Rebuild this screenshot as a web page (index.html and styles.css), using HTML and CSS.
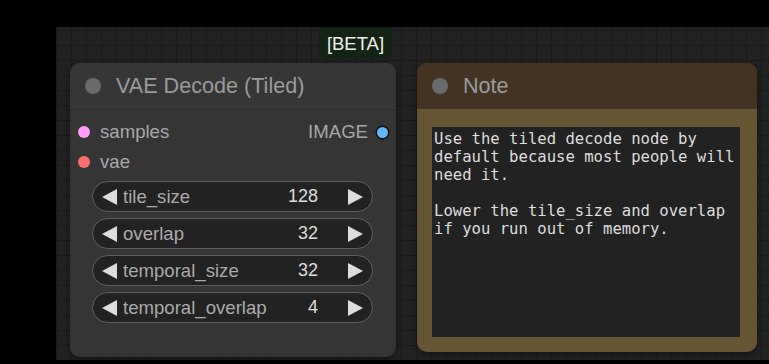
FILE: index.html
```html
<!DOCTYPE html>
<html lang="en">
<head>
  <meta charset="UTF-8">
  <meta name="viewport" content="width=device-width, initial-scale=1.0">
  <title>VAE Decode (Tiled)</title>
  <link rel="stylesheet" href="styles.css">
</head>
<body>
  <div class="canvas">
    <div class="badge">[BETA]</div>

    <div class="node vae">
      <div class="node-title">
        <span class="title-dot"></span>
        <span class="title-text">VAE Decode (Tiled)</span>
      </div>
      <div class="node-body">
        <div class="slot-row">
          <div class="slot"><span class="dot latent"></span>samples</div>
          <div class="slot out">IMAGE<span class="dot image"></span></div>
        </div>
        <div class="slot-row">
          <div class="slot"><span class="dot vae-in"></span>vae</div>
        </div>
        <div class="widgets">
          <div class="widget">
            <svg class="arrow" width="15" height="16" viewBox="0 0 15 16"><polygon points="15,0 15,16 0,8"/></svg>
            <span class="w-label">tile_size</span>
            <span class="w-value">128</span>
            <svg class="arrow" width="15" height="16" viewBox="0 0 15 16"><polygon points="0,0 0,16 15,8"/></svg>
          </div>
          <div class="widget">
            <svg class="arrow" width="15" height="16" viewBox="0 0 15 16"><polygon points="15,0 15,16 0,8"/></svg>
            <span class="w-label">overlap</span>
            <span class="w-value">32</span>
            <svg class="arrow" width="15" height="16" viewBox="0 0 15 16"><polygon points="0,0 0,16 15,8"/></svg>
          </div>
          <div class="widget">
            <svg class="arrow" width="15" height="16" viewBox="0 0 15 16"><polygon points="15,0 15,16 0,8"/></svg>
            <span class="w-label">temporal_size</span>
            <span class="w-value">32</span>
            <svg class="arrow" width="15" height="16" viewBox="0 0 15 16"><polygon points="0,0 0,16 15,8"/></svg>
          </div>
          <div class="widget">
            <svg class="arrow" width="15" height="16" viewBox="0 0 15 16"><polygon points="15,0 15,16 0,8"/></svg>
            <span class="w-label">temporal_overlap</span>
            <span class="w-value">4</span>
            <svg class="arrow" width="15" height="16" viewBox="0 0 15 16"><polygon points="0,0 0,16 15,8"/></svg>
          </div>
        </div>
      </div>
    </div>

    <div class="node note">
      <div class="node-title">
        <span class="title-dot"></span>
        <span class="title-text">Note</span>
      </div>
      <div class="note-body">
        <textarea class="note-text" readonly>Use the tiled decode node by default because most people will need it.

Lower the tile_size and overlap if you run out of memory.</textarea>
      </div>
    </div>
  </div>
</body>
</html>
```

FILE: styles.css
```css
body {
  margin: 0;
  background: #000;
  font-family: 'Liberation Sans', Arial, sans-serif;
  overflow: hidden;
}
.canvas {
  position: relative;
  margin: 27px 0 0 56px;
  height: 333px;
  background-color: #222;
  background-image:
    linear-gradient(to right, #1a1a1a 1px, transparent 1px),
    linear-gradient(to bottom, #1a1a1a 1px, transparent 1px);
  background-size: 15px 15px;
  background-position: 0 3px;
}
.badge {
  position: absolute;
  left: 263px;
  top: 0;
  width: 73px;
  height: 31px;
  line-height: 33px;
  text-align: center;
  background: #142414;
  border-radius: 0 0 6px 6px;
  color: #eee;
  font-size: 18.5px;
}
.node {
  position: absolute;
  top: 36px;
  border-radius: 10px;
  box-shadow: 0 2px 6px rgba(0, 0, 0, 0.45);
  overflow: hidden;
}
.node-title {
  display: flex;
  align-items: center;
  height: 46px;
  padding-left: 15px;
  gap: 15px;
}
.title-dot {
  width: 16px;
  height: 16px;
  border-radius: 50%;
  background: #6a6a6a;
}
.title-text {
  font-size: 21.6px;
  color: #9a9a9a;
}

/* VAE decode node */
.vae {
  left: 14px;
  width: 326px;
  height: 294px;
  background: #353535;
}
.vae .node-title {
  background: #363636;
  border-bottom: 1px solid #2c2c2c;
}
.node-body {
  padding-top: 7px;
}
.slot-row {
  display: flex;
  justify-content: space-between;
  align-items: center;
  height: 30px;
  padding: 0 8px 0 8px;
}
.slot {
  display: flex;
  align-items: center;
  gap: 10px;
  font-size: 18.6px;
  color: #a8a8a8;
}
.dot {
  width: 12px;
  height: 12px;
  border-radius: 50%;
}
.latent { background: #ff9cf9; }
.vae-in { background: #ff6e6e; }
.image {
  background: #64b5f6;
  box-shadow: 0 0 0 1.5px #111;
  width: 11px;
  height: 11px;
}
.out {
  gap: 9px;
}
.widgets {
  display: flex;
  flex-direction: column;
  gap: 6px;
  padding: 4px 23px 0 22px;
}
.widget {
  display: flex;
  align-items: center;
  height: 29px;
  padding: 0 9px 0 9px;
  background: #222;
  border: 1px solid #5f5f5f;
  border-radius: 16px;
  font-size: 18.6px;
}
.arrow {
  fill: #ddd;
  flex: none;
}
.w-label {
  flex: 1;
  margin-left: 6px;
  color: #aaa;
}
.w-value {
  color: #ddd;
  font-size: 18px;
  margin-right: 30px;
}

/* Note node */
.note {
  left: 361px;
  width: 340px;
  height: 289px;
  background: #665533;
}
.note .node-title {
  background: #443322;
}
.note-body {
  padding: 18px 17px 15px 15px;
  height: 210px;
}
.note-text {
  display: block;
  box-sizing: border-box;
  width: 100%;
  height: 100%;
  margin: 0;
  padding: 3px 2px;
  border: none;
  resize: none;
  background: #222;
  color: #ddd;
  font-family: 'DejaVu Sans Mono', monospace;
  font-size: 15.6px;
  line-height: 18px;
  outline: none;
  overflow: hidden;
}
```
